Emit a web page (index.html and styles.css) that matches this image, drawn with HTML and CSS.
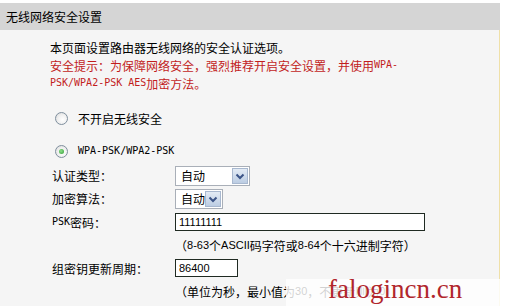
FILE: index.html
```html
<!DOCTYPE html>
<html lang="zh">
<head>
<meta charset="utf-8">
<title>无线网络安全设置</title>
<link rel="stylesheet" href="styles.css">
</head>
<body>
<div class="page">
  <div class="title">无线网络安全设置</div>
  <div class="panel">
    <div class="intro">
      <p>本页面设置路由器无线网络的安全认证选项。</p>
      <p class="warn">安全提示：为保障网络安全，强烈推荐开启安全设置，并使用<span class="mono">WPA-</span></p>
      <p class="warn"><span class="mono">PSK/WPA2-PSK AES</span>加密方法。</p>
    </div>
    <div class="radio-row"><span class="radio"></span><span>不开启无线安全</span></div>
    <div class="radio-row second"><span class="radio checked"></span><span class="mono">WPA-PSK/WPA2-PSK</span></div>
    <div class="form">
      <div class="label r1">认证类型：</div>
      <div class="ctrl r1">
        <div class="select wide"><span class="sel-text">自动</span><span class="arrow"><svg width="14" height="14" viewBox="0 0 14 14"><path d="M3.5 5.5 L7 9 L10.5 5.5" fill="none" stroke="#3b5487" stroke-width="2"/></svg></span></div>
      </div>
      <div class="label r2">加密算法：</div>
      <div class="ctrl r2">
        <div class="select narrow"><span class="sel-text">自动</span><span class="arrow"><svg width="14" height="14" viewBox="0 0 14 14"><path d="M3.5 5.5 L7 9 L10.5 5.5" fill="none" stroke="#3b5487" stroke-width="2"/></svg></span></div>
      </div>
      <div class="label r3"><span class="mono">PSK</span>密码：</div>
      <div class="ctrl r3"><div class="input psk">11111111</div></div>
      <div class="hint r4">（<span class="lat">8-63</span>个<span class="lat">ASCII</span>码字符或<span class="lat">8-64</span>个十六进制字符）</div>
      <div class="label r5">组密钥更新周期：</div>
      <div class="ctrl r5"><div class="input period">86400</div></div>
      <div class="hint r6">（单位为秒，最小值为<span class="lat">30</span>，不更新则为<span class="lat">0</span>）</div>
    </div>
  </div>
  <div class="wm-box"></div>
  <div class="watermark">falogincn.cn</div>
</div>
</body>
</html>
```

FILE: styles.css
```css
html, body {
  margin: 0;
  padding: 0;
  background: #ffffff;
}
body {
  font-family: "Noto Sans CJK SC", "Noto Sans", sans-serif;
  font-size: 12px;
  color: #000;
  overflow: hidden;
}
.page {
  position: relative;
  width: 505px;
  height: 306px;
  padding-top: 3px;
  box-sizing: border-box;
}
.title {
  width: 494px;
  height: 27px;
  line-height: 27px;
  padding-left: 6px;
  background: #d5d5d5;
  font-size: 12px;
}
.panel {
  width: 500px;
  height: 280px;
  background: #f5f5f5;
  border-right: 1px solid #efe0a8;
  box-sizing: border-box;
  padding-top: 8px;
}
.intro {
  padding-left: 50px;
}
.intro p {
  margin: 0;
  height: 18px;
  display: flex;
  align-items: center;
  white-space: nowrap;
}
.warn {
  color: #c21d1d;
}
.mono {
  font-family: "DejaVu Sans Mono", monospace;
  font-size: 10px;
  line-height: 1;
}
.radio-row {
  display: flex;
  align-items: center;
  gap: 10px;
  height: 20px;
  margin-top: 16px;
  padding-left: 55px;
}
.radio-row.second {
  margin-top: 13px;
}
.radio {
  width: 11px;
  height: 11px;
  border: 1px solid #7f8f9e;
  border-radius: 50%;
  background: radial-gradient(circle at 60% 60%, #ffffff 0%, #f0f0f0 50%, #d6d6d6 100%);
  display: flex;
  align-items: center;
  justify-content: center;
}
.radio.checked::after {
  content: "";
  width: 5px;
  height: 5px;
  border-radius: 50%;
  background: radial-gradient(circle at 40% 40%, #8ee08a, #2f9a34);
}
.form {
  display: grid;
  grid-template-columns: 123px 1fr;
  grid-template-rows: 23px 23px 24px 22px 24px 22px;
  margin-top: 3px;
  padding-left: 52px;
}
.label {
  grid-column: 1;
  display: flex;
  align-items: center;
}
.ctrl {
  grid-column: 2;
  display: flex;
  align-items: center;
}
.r1 { grid-row: 1; }
.r2 { grid-row: 2; }
.r3 { grid-row: 3; }
.r4 { grid-row: 4; }
.r5 { grid-row: 5; }
.r6 { grid-row: 6; }
.hint {
  grid-column: 2;
  display: flex;
  align-items: center;
  white-space: nowrap;
}
.lat {
  font-family: "Liberation Sans", sans-serif;
  font-size: 11px;
  line-height: 1;
}
.select {
  height: 20px;
  box-sizing: border-box;
  border: 1px solid #a9afb8;
  background: #fff;
  display: flex;
  align-items: center;
  justify-content: space-between;
  padding: 0 1px 0 5px;
}
.select.wide { width: 75px; }
.select.narrow { width: 48px; }
.arrow {
  width: 16px;
  height: 16px;
  box-sizing: border-box;
  border: 1px solid #a8b8cf;
  background: linear-gradient(#e3ebf5, #bccde3);
  display: flex;
  align-items: center;
  justify-content: center;
}
.input {
  height: 18px;
  box-sizing: border-box;
  border: 1px solid #1f2a22;
  background: #fff;
  font-family: "Liberation Sans", sans-serif;
  font-size: 11px;
  line-height: 16px;
  padding-left: 3px;
}
.input.psk { width: 250px; }
.input.period { width: 63px; }
.wm-box {
  position: absolute;
  left: 286px;
  top: 279px;
  width: 214px;
  height: 27px;
  background: rgba(255, 255, 255, 0.82);
}
.watermark {
  position: absolute;
  left: 328px;
  top: 274px;
  font-family: "Liberation Serif", serif;
  font-size: 27px;
  line-height: 30px;
  color: #b1262c;
}
```
